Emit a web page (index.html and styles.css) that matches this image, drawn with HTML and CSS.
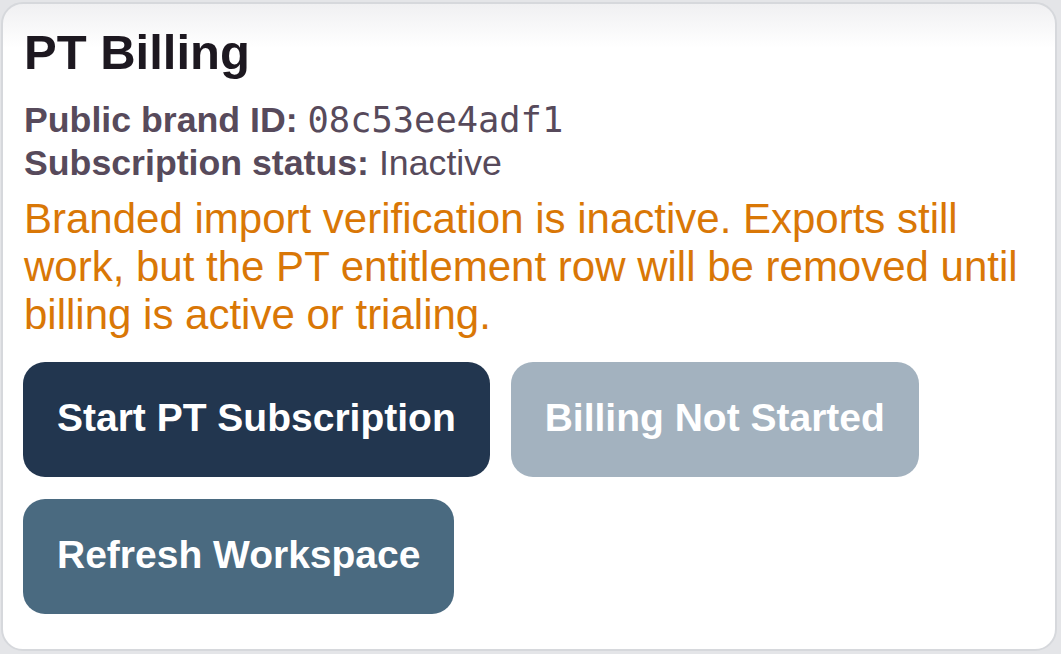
FILE: index.html
```html
<!DOCTYPE html>
<html lang="en">
<head>
<meta charset="utf-8">
<title>PT Billing</title>
<link rel="stylesheet" href="styles.css">
</head>
<body>
<section class="card">
  <h2 class="title">PT Billing</h2>
  <div class="meta">
    <div class="meta-row"><strong>Public brand ID:</strong> <code class="mono">08c53ee4adf1</code></div>
    <div class="meta-row"><strong>Subscription status:</strong> Inactive</div>
  </div>
  <p class="warning">Branded import verification is inactive. Exports still work, but the PT entitlement row will be removed until billing is active or trialing.</p>
  <div class="actions">
    <button class="btn btn-primary">Start PT Subscription</button>
    <button class="btn btn-disabled" disabled>Billing Not Started</button>
    <button class="btn btn-secondary">Refresh Workspace</button>
  </div>
</section>
</body>
</html>
```
FILE: styles.css
```css
html, body {
  margin: 0;
  padding: 0;
}
body {
  background: #e4e5e8;
  padding: 2px 4px 3px 1px;
  font-family: "Liberation Sans", Arial, sans-serif;
}
.card {
  box-sizing: border-box;
  height: 649px;
  background: linear-gradient(to bottom, #f0f0f2 0px, #ffffff 44px, #ffffff 100%);
  border: 2px solid #d6d8dc;
  border-radius: 22px;
  padding: 20px 20px 30px 20px;
}
.title {
  margin: 0 0 0 1px;
  font-size: 49px;
  line-height: 56px;
  font-weight: 700;
  color: #1d1820;
}
.meta {
  margin: 18px 0 0 1px;
  font-size: 35.7px;
  line-height: 43px;
  color: #574a5b;
}
.meta strong {
  font-weight: 700;
}
.mono {
  font-family: "DejaVu Sans Mono", "Liberation Mono", monospace;
  font-size: 35.4px;
}
.warning {
  margin: 10px 0 0 1px;
  font-size: 42px;
  line-height: 48px;
  color: #d97706;
}
.actions {
  margin-top: 23px;
  display: flex;
  flex-wrap: wrap;
  gap: 22px 21px;
  max-width: 920px;
}
.btn {
  font-family: "Liberation Sans", Arial, sans-serif;
  font-weight: 700;
  font-size: 39px;
  line-height: 45px;
  padding: 33px 34px 37px;
  border: none;
  border-radius: 22px;
  color: #ffffff;
}
.btn-primary {
  background: #22364f;
}
.btn-disabled {
  background: #a3b2bf;
}
.btn-secondary {
  background: #4a6a80;
}
```
